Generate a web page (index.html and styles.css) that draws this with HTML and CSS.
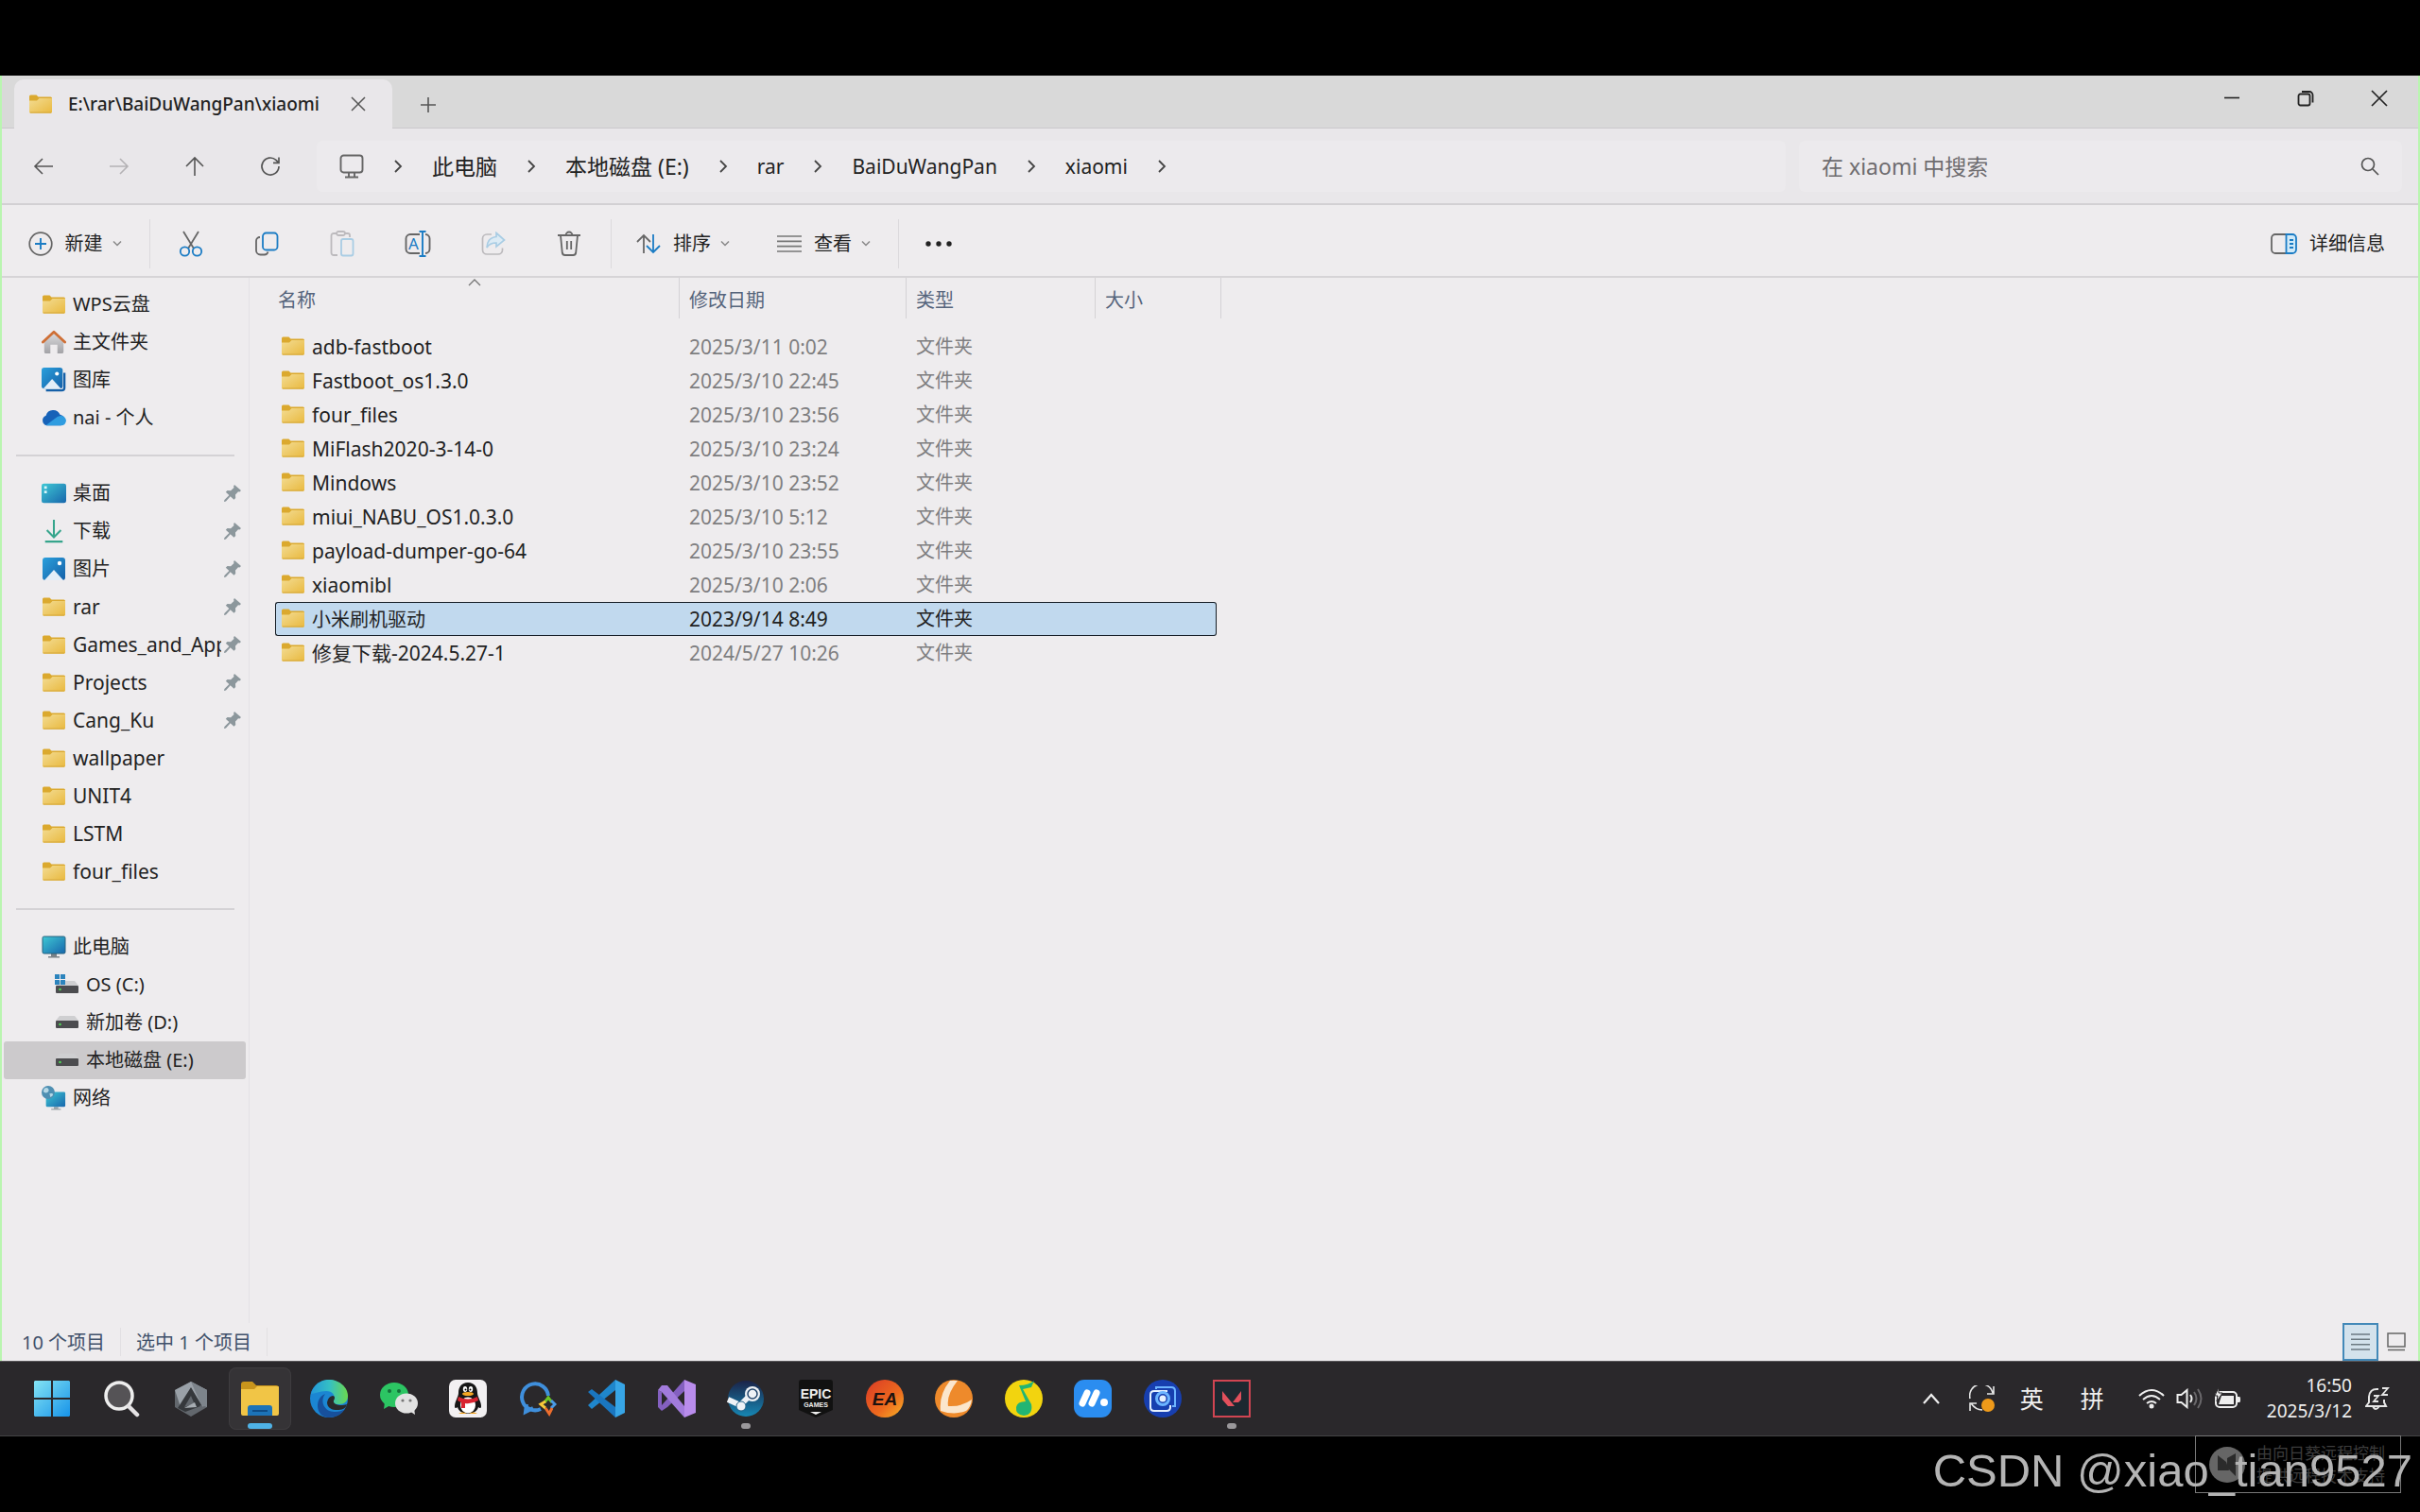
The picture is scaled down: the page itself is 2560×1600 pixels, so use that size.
FILE: index.html
```
<!DOCTYPE html>
<html lang="zh-CN">
<head>
    <meta charset="UTF-8">
    <meta name="viewport" content="width=device-width, initial-scale=1.0">
    <title>E:\rar\BaiDuWangPan\xiaomi</title>
    <link rel="stylesheet" href="styles.css">
</head>
<body>
    <!-- Shared icons -->
    <svg class="sprite" aria-hidden="true">
        <defs>
            <linearGradient id="g-folder" x1="0" y1="0" x2="1" y2="1"><stop offset="0" stop-color="#f3dc93"/><stop offset="1" stop-color="#e9b93f"/></linearGradient>
            <linearGradient id="g-blue" x1="0" y1="0" x2="1" y2="1"><stop offset="0" stop-color="#2ba0dc"/><stop offset="1" stop-color="#1560a8"/></linearGradient>
            <linearGradient id="g-teal" x1="0" y1="0" x2="1" y2="1"><stop offset="0" stop-color="#3fc8d4"/><stop offset="1" stop-color="#1766ac"/></linearGradient>
            <linearGradient id="g-gray" x1="0" y1="0" x2="0" y2="1"><stop offset="0" stop-color="#dcdcde"/><stop offset="1" stop-color="#a2a2a6"/></linearGradient>
            <linearGradient id="g-win" x1="0" y1="0" x2="1" y2="1"><stop offset="0" stop-color="#84e4f4"/><stop offset="1" stop-color="#1793e8"/></linearGradient>
            <linearGradient id="g-edge" x1="0" y1="0" x2="1" y2="0"><stop offset="0" stop-color="#2397d8"/><stop offset="0.5" stop-color="#35bfc4"/><stop offset="1" stop-color="#6bd84e"/></linearGradient>
            <linearGradient id="g-steam" x1="0" y1="0" x2="0" y2="1"><stop offset="0" stop-color="#1b2348"/><stop offset="1" stop-color="#1687b4"/></linearGradient>
            <linearGradient id="g-ea" x1="0" y1="0" x2="1" y2="1"><stop offset="0" stop-color="#d93a26"/><stop offset="0.6" stop-color="#ee6a1e"/><stop offset="1" stop-color="#f6b428"/></linearGradient>
        </defs>
        <symbol id="folder" viewBox="0 0 24 20">
            <path d="M0 2a1.500 1.500 0 0 1 1.500-1.500h6l2 2h13a1.500 1.500 0 0 1 1.500 1.500v14a1.500 1.500 0 0 1-1.500 1.500h-21a1.500 1.500 0 0 1-1.500-1.500z" fill="#dba92e"/>
            <path d="M0 6.500h8l2.500-2.500h13.500v14a1.500 1.500 0 0 1-1.500 1.500h-21a1.500 1.500 0 0 1-1.500-1.500z" fill="url(#g-folder)"/>
            <path d="M1 19h22" stroke="#d6a93c"/>
        </symbol>
        <symbol id="picture" viewBox="0 0 26 26">
            <rect x="1" y="1" width="24" height="24" rx="3" fill="url(#g-blue)"/>
            <path d="M3 25l10-11 10 11z" fill="#e4eef8"/><circle cx="19" cy="7" r="2.200" fill="#fff"/>
        </symbol>
        <symbol id="drive" viewBox="0 0 26 14">
            <path d="M5 0h16l4 5h-24z" fill="#cfcfd1"/><rect x="1" y="5" width="24" height="8" rx="1" fill="#4c4c4f"/><circle cx="5.500" cy="9" r="1.300" fill="#4fd455"/>
        </symbol>
        <symbol id="pin" viewBox="0 0 18 18">
            <path d="M11 0l7 6-1.500 1.500-1.500-.3-3 3.300.2 3.500-1.700 1.800-3.800-3.500-4.700 5.200-2 .500.400-2 5-4.900-3.600-3.400 1.700-1.700 3.600.2 3.400-3.200-.4-1.600z" fill="#8c979c"/>
        </symbol>
        <symbol id="chev-right" viewBox="0 0 10 16"><path d="M2 2l6 6-6 6" fill="none" stroke="#444" stroke-width="1.800"/></symbol>
        <symbol id="chev-down" viewBox="0 0 12 8"><path d="M2 1.500l4 4 4-4" fill="none" stroke="#888" stroke-width="1.500"/></symbol>
    </svg>

    <main class="screen">
        <header class="titlebar">
            <div class="tab">
                <svg class="ico-folder"><use href="#folder"/></svg>
                <span class="tab-title">E:\rar\BaiDuWangPan\xiaomi</span>
                <button class="tab-close" aria-label="关闭标签页"><svg width="16" height="16" viewBox="0 0 16 16"><path d="M1 1l14 14M15 1L1 15" stroke="#555" stroke-width="1.500"/></svg></button>
            </div>
            <button class="tab-new" aria-label="新标签页"><svg width="18" height="18" viewBox="0 0 18 18"><path d="M9 1v16M1 9h16" stroke="#555" stroke-width="1.600"/></svg></button>
            <div class="window-buttons">
                <button aria-label="最小化"><svg width="18" height="18" viewBox="0 0 18 18"><path d="M1 8.500h16" stroke="#222" stroke-width="1.600"/></svg></button>
                <button aria-label="还原"><svg width="18" height="18" viewBox="0 0 18 18" fill="none" stroke="#222" stroke-width="1.800"><rect x="1.500" y="4.500" width="12" height="12" rx="2"/><path d="M5 2h8a3.500 3.500 0 0 1 3.500 3.500v8"/></svg></button>
                <button aria-label="关闭"><svg width="18" height="18" viewBox="0 0 18 18"><path d="M1 1l16 16M17 1L1 17" stroke="#222" stroke-width="1.700"/></svg></button>
            </div>
        </header>

        <div class="address-row">
            <div class="nav-buttons">
                <button aria-label="后退"><svg width="22" height="20" viewBox="0 0 22 20"><path d="M21 10H2M10 2l-8 8 8 8" fill="none" stroke="#555" stroke-width="1.600"/></svg></button>
                <button aria-label="前进"><svg width="22" height="20" viewBox="0 0 22 20"><path d="M1 10h19M12 2l8 8-8 8" fill="none" stroke="#b4b2b5" stroke-width="1.600"/></svg></button>
                <button aria-label="向上"><svg width="20" height="22" viewBox="0 0 20 22"><path d="M10 21V2M1 11l9-9 9 9" fill="none" stroke="#555" stroke-width="1.600"/></svg></button>
                <button aria-label="刷新"><svg width="22" height="22" viewBox="0 0 22 22"><path d="M20 11a9 9 0 1 1-3-6.700l2.500 2.500M20 1.500v5.800h-6" fill="none" stroke="#555" stroke-width="1.700"/></svg></button>
            </div>
            <nav class="breadcrumb" aria-label="路径">
                <svg width="26" height="26" viewBox="0 0 26 26" fill="none" stroke="#666" stroke-width="1.900"><rect x="1.500" y="1.500" width="23" height="18" rx="3"/><path d="M10 20v4M16 20v4M6 24.500h14"/></svg>
                <svg class="sep"><use href="#chev-right"/></svg>
                <a href="#">此电脑</a>
                <svg class="sep"><use href="#chev-right"/></svg>
                <a href="#">本地磁盘 (E:)</a>
                <svg class="sep"><use href="#chev-right"/></svg>
                <a href="#" class="latin">rar</a>
                <svg class="sep"><use href="#chev-right"/></svg>
                <a href="#" class="latin">BaiDuWangPan</a>
                <svg class="sep"><use href="#chev-right"/></svg>
                <a href="#" class="latin">xiaomi</a>
                <svg class="sep"><use href="#chev-right"/></svg>
            </nav>
            <div class="search">
                <input type="text" placeholder="在 xiaomi 中搜索" aria-label="搜索">
                <svg width="20" height="20" viewBox="0 0 20 20" fill="none" stroke="#555" stroke-width="1.700"><circle cx="8" cy="8" r="6.500"/><path d="M13 13l6 6"/></svg>
            </div>
        </div>

        <div class="toolbar">
            <button class="tool-label tool-new">
                <svg width="26" height="26" viewBox="0 0 26 26" fill="none"><circle cx="13" cy="13" r="11.800" stroke="#666" stroke-width="1.700"/><path d="M13 7v12M7 13h12" stroke="#1b7cc4" stroke-width="1.900"/></svg>
                <span>新建</span>
                <svg class="down"><use href="#chev-down"/></svg>
            </button>
            <i class="divider"></i>
            <div class="tools">
                <button aria-label="剪切"><svg width="26" height="28" viewBox="0 0 26 28" fill="none" stroke-width="1.800"><path d="M5 1l11 18M21 1L10 19" stroke="#666"/><circle cx="6.500" cy="22" r="4.700" stroke="#1b7cc4"/><circle cx="19.500" cy="22" r="4.700" stroke="#1b7cc4"/></svg></button>
                <button aria-label="复制"><svg width="26" height="26" viewBox="0 0 26 26" fill="none" stroke-width="1.800"><path d="M6 6a4 4 0 0 0-4 4v10a4.500 4.500 0 0 0 4.500 4.500h4a4 4 0 0 0 4-3" stroke="#666"/><rect x="9" y="1.500" width="15.500" height="18" rx="3.500" stroke="#1b7cc4"/></svg></button>
                <button aria-label="粘贴"><svg width="26" height="28" viewBox="0 0 26 28" fill="none" stroke-width="1.800"><path d="M8 26H4a2.500 2.500 0 0 1-2.500-2.500v-18A2.500 2.500 0 0 1 4 3h3M16 3h3a2 2 0 0 1 2 2v2" stroke="#bcbabd"/><rect x="7" y="1" width="9" height="4" rx="2" stroke="#bcbabd"/><rect x="12" y="9" width="12.500" height="17.500" rx="2" stroke="#a9cde4"/></svg></button>
                <button aria-label="重命名"><svg width="28" height="28" viewBox="0 0 28 28" fill="none" stroke-width="1.900"><path d="M16 4H6a4.500 4.500 0 0 0-4.500 4.500v11A4.500 4.500 0 0 0 6 24h10M22 4a4.500 4.500 0 0 1 4.500 4.500v11A4.500 4.500 0 0 1 22 24" stroke="#666"/><path d="M15.500 1h7M15.500 27h7M19 1v26" stroke="#1b7cc4"/><text x="4" y="20" class="rename-a">A</text></svg></button>
                <button aria-label="共享"><svg width="26" height="26" viewBox="0 0 26 26" fill="none" stroke-width="1.700"><path d="M11 3H6a4.500 4.500 0 0 0-4.500 4.500v12A4.500 4.500 0 0 0 6 24h12a4.500 4.500 0 0 0 4.500-4.500v-2" stroke="#bcbabd"/><path d="M16 1.500l8.500 7.500-8.500 7v-4q-7 0-10 5 .500-10.500 10-11.500z" fill="#dcebf5" stroke="#a9cde4"/></svg></button>
                <button aria-label="删除"><svg width="26" height="28" viewBox="0 0 26 28" fill="none" stroke="#666" stroke-width="1.800"><path d="M1 5h24M4 5l1.800 18.500a3 3 0 0 0 3 2.500h8.400a3 3 0 0 0 3-2.500L22 5M9.500 5a3.500 3.500 0 0 1 7 0M10.800 11v9M15.200 11v9"/></svg></button>
            </div>
            <i class="divider"></i>
            <button class="tool-label tool-sort">
                <svg width="26" height="22" viewBox="0 0 26 22" fill="none" stroke-width="1.800"><path d="M8 21V2M1 9l7-7 7 7" stroke="#666"/><path d="M18 1v19M11 13l7 7 7-7" stroke="#1b7cc4"/></svg>
                <span>排序</span>
                <svg class="down"><use href="#chev-down"/></svg>
            </button>
            <button class="tool-label tool-view">
                <svg width="26" height="20" viewBox="0 0 26 20"><path d="M0 2h26M0 7.300h26M0 12.700h26M0 18h26" stroke="#777" stroke-width="1.700"/></svg>
                <span>查看</span>
                <svg class="down"><use href="#chev-down"/></svg>
            </button>
            <i class="divider"></i>
            <button class="tool-more" aria-label="更多"><svg width="28" height="6" viewBox="0 0 28 6" fill="#222"><circle cx="3" cy="3" r="2.700"/><circle cx="14" cy="3" r="2.700"/><circle cx="25" cy="3" r="2.700"/></svg></button>
            <button class="tool-label tool-details">
                <svg width="28" height="22" viewBox="0 0 28 22" fill="none" stroke-width="1.800"><path d="M16 21H5a4 4 0 0 1-4-4V5a4 4 0 0 1 4-4h11" stroke="#666"/><path d="M16.500 1H23a4 4 0 0 1 4 4v12a4 4 0 0 1-4 4h-6.500z" fill="#cfe9f8" stroke="#1b7cc4"/><path d="M20 7h4M20 11h4M20 15h4" stroke="#1b7cc4"/></svg>
                <span>详细信息</span>
            </button>
        </div>

        <div class="content">
            <nav class="sidebar" aria-label="导航窗格">
                <a href="#"><svg class="ico-folder"><use href="#folder"/></svg><span class="zh">WPS云盘</span></a>
                <a href="#"><svg width="28" height="28" viewBox="0 0 28 28"><path d="M3 12L14 3l11 9v13a2 2 0 0 1-2 2h-5v-10h-8v10H5a2 2 0 0 1-2-2z" fill="url(#g-gray)"/><path d="M1.500 14L14 2.500 26.500 14" fill="none" stroke="#cf6f35" stroke-width="3" stroke-linecap="round" stroke-linejoin="round"/></svg><span class="zh">主文件夹</span></a>
                <a href="#"><svg width="28" height="28" viewBox="0 0 28 28"><path d="M5 26h18q3 0 3-3V6" fill="none" stroke="#1560a8" stroke-width="2.500"/><rect width="24" height="24" rx="3" fill="url(#g-blue)"/><path d="M2 24l10-11 10 11z" fill="#e4eef8"/><circle cx="17.500" cy="7" r="2.200" fill="#fff"/></svg><span class="zh">图库</span></a>
                <a href="#"><svg width="28" height="18" viewBox="0 0 28 18"><path d="M6 18a6 6 0 0 1-1-11.500A8.500 8.500 0 0 1 21 5.500 6.500 6.500 0 0 1 22 18z" fill="#1662b8"/><path d="M5 17.500L18 8q8-3.500 10 4-.500 6-6 6H6z" fill="#2f9ce0"/></svg><span class="zh">nai - 个人</span></a>
                <hr>
                <a href="#"><svg width="28" height="22" viewBox="0 0 28 22"><rect width="28" height="22" rx="2.500" fill="url(#g-teal)"/><path d="M3 3h3v3H3zM3 8h3v3H3z" fill="#d8f6fa"/></svg><span class="zh">桌面</span><svg class="pin"><use href="#pin"/></svg></a>
                <a href="#"><svg width="28" height="28" viewBox="0 0 28 28"><path d="M14 1v19M6 13l8 8 8-8M4 26h20" fill="none" stroke="#36a58c" stroke-width="2.200"/></svg><span class="zh">下载</span><svg class="pin"><use href="#pin"/></svg></a>
                <a href="#"><svg width="26" height="26"><use href="#picture"/></svg><span class="zh">图片</span><svg class="pin"><use href="#pin"/></svg></a>
                <a href="#"><svg class="ico-folder"><use href="#folder"/></svg><span>rar</span><svg class="pin"><use href="#pin"/></svg></a>
                <a href="#"><svg class="ico-folder"><use href="#folder"/></svg><span>Games_and_App</span><svg class="pin"><use href="#pin"/></svg></a>
                <a href="#"><svg class="ico-folder"><use href="#folder"/></svg><span>Projects</span><svg class="pin"><use href="#pin"/></svg></a>
                <a href="#"><svg class="ico-folder"><use href="#folder"/></svg><span>Cang_Ku</span><svg class="pin"><use href="#pin"/></svg></a>
                <a href="#"><svg class="ico-folder"><use href="#folder"/></svg><span>wallpaper</span></a>
                <a href="#"><svg class="ico-folder"><use href="#folder"/></svg><span>UNIT4</span></a>
                <a href="#"><svg class="ico-folder"><use href="#folder"/></svg><span>LSTM</span></a>
                <a href="#"><svg class="ico-folder"><use href="#folder"/></svg><span>four_files</span></a>
                <hr>
                <a href="#"><svg width="26" height="24" viewBox="0 0 26 24"><path d="M10 19h6v3h3v1.500H7V22h3z" fill="#7a8288"/><rect x="1" y="1" width="24" height="18" rx="1.500" fill="url(#g-teal)" stroke="#27627f"/></svg><span class="zh">此电脑</span></a>
                <a href="#" class="drive"><svg width="26" height="22" viewBox="0 0 26 22"><use href="#drive" y="7" width="26" height="14"/><path d="M0 0h5v5H0zM6 0h5v5H6zM0 6h5v5H0zM6 6h5v5H6z" fill="#2c84bd"/></svg><span class="zh">OS (C:)</span></a>
                <a href="#" class="drive"><svg width="26" height="14"><use href="#drive"/></svg><span class="zh">新加卷 (D:)</span></a>
                <a href="#" class="drive current"><svg width="26" height="14"><use href="#drive"/></svg><span class="zh">本地磁盘 (E:)</span></a>
                <a href="#"><svg width="28" height="28" viewBox="0 0 28 28"><path d="M14 24h5v2h3v1.500H11V26h3z" fill="#9aa3a8"/><rect x="5" y="7" width="22" height="17" rx="1.500" fill="url(#g-teal)"/><circle cx="7.500" cy="7.500" r="7.500" fill="#4e8fb2"/><path d="M3 3q4-2 5 1t-3 4q-3 0-3-2zM9 9q4-1 4 1t-3 3z" fill="#b5d8e6"/></svg><span class="zh">网络</span></a>
            </nav>

            <section class="files">
                <table>
                    <colgroup><col class="c-name"><col class="c-date"><col class="c-type"><col class="c-size"><col class="c-end"></colgroup>
                    <thead>
                        <tr>
                            <th><button>名称</button><svg class="sort-mark" width="14" height="9" viewBox="0 0 14 9"><path d="M1 8l6-6 6 6" fill="none" stroke="#777" stroke-width="1.400"/></svg></th>
                            <th><button>修改日期</button></th>
                            <th><button>类型</button></th>
                            <th colspan="2"><button>大小</button></th>
                        </tr>
                    </thead>
                    <tbody>
                        <tr><td><svg class="ico-folder"><use href="#folder"/></svg>adb-fastboot</td><td>2025/3/11 0:02</td><td>文件夹</td><td></td></tr>
                        <tr><td><svg class="ico-folder"><use href="#folder"/></svg>Fastboot_os1.3.0</td><td>2025/3/10 22:45</td><td>文件夹</td><td></td></tr>
                        <tr><td><svg class="ico-folder"><use href="#folder"/></svg>four_files</td><td>2025/3/10 23:56</td><td>文件夹</td><td></td></tr>
                        <tr><td><svg class="ico-folder"><use href="#folder"/></svg>MiFlash2020-3-14-0</td><td>2025/3/10 23:24</td><td>文件夹</td><td></td></tr>
                        <tr><td><svg class="ico-folder"><use href="#folder"/></svg>Mindows</td><td>2025/3/10 23:52</td><td>文件夹</td><td></td></tr>
                        <tr><td><svg class="ico-folder"><use href="#folder"/></svg>miui_NABU_OS1.0.3.0</td><td>2025/3/10 5:12</td><td>文件夹</td><td></td></tr>
                        <tr><td><svg class="ico-folder"><use href="#folder"/></svg>payload-dumper-go-64</td><td>2025/3/10 23:55</td><td>文件夹</td><td></td></tr>
                        <tr><td><svg class="ico-folder"><use href="#folder"/></svg>xiaomibl</td><td>2025/3/10 2:06</td><td>文件夹</td><td></td></tr>
                        <tr class="selected"><td><svg class="ico-folder"><use href="#folder"/></svg><span class="zh">小米刷机驱动</span></td><td>2023/9/14 8:49</td><td>文件夹</td><td></td></tr>
                        <tr><td><svg class="ico-folder"><use href="#folder"/></svg>修复下载-2024.5.27-1</td><td>2024/5/27 10:26</td><td>文件夹</td><td></td></tr>
                    </tbody>
                </table>
            </section>
        </div>

        <footer class="statusbar">
            <span>10 个项目</span>
            <span>选中 1 个项目</span>
            <div class="view-switch">
                <button class="on" aria-label="详细信息视图"><svg width="20" height="20" viewBox="0 0 20 20"><path d="M0 2h20M0 7.300h20M0 12.700h20M0 18h20" stroke="#6c7a82" stroke-width="1.600"/></svg></button>
                <button aria-label="大图标视图"><svg width="20" height="20" viewBox="0 0 20 20" fill="none" stroke="#666" stroke-width="1.500"><path d="M1 1h18v14H1zM1 18.500h18"/></svg></button>
            </div>
        </footer>

        <div class="taskbar">
            <div class="apps">
                <button aria-label="开始"><svg class="app" viewBox="0 0 40 40"><path d="M2 1h17v18H1V2zM21 1h17l1 1v17H21zM1 21h18v18H2l-1-1zM21 21h18v17l-1 1H21z" fill="url(#g-win)"/></svg></button>
                <button aria-label="搜索"><svg class="app" viewBox="0 0 40 40"><circle cx="18" cy="17" r="14" fill="#555356" stroke="#eee" stroke-width="3.500"/><path d="M28 28l9 9" stroke="#e4e2e4" stroke-width="4.500" stroke-linecap="round"/></svg></button>
                <button aria-label="游戏助手"><svg class="app" viewBox="0 0 40 40"><path d="M20 2l17 9v18l-17 10L3 29V11z" fill="#62676d"/><path d="M20 2l17 9-4 18-13-20L9 29 3 11z" fill="#9aa1a8"/><path d="M20 2l17 9v18l-6-2z" fill="#7d848b"/><path d="M20 8l11 19-6 2-5-12-7 12 9-3 8 2-16 6-8-4z" fill="#35383c"/><path d="M13 30l11-6 2 5z" fill="#a7adb3"/></svg></button>
                <button class="active" aria-label="文件资源管理器"><svg class="app" viewBox="0 0 40 40"><path d="M0 5q0-3 3-3h9l4 4h21q3 0 3 3v6H0z" fill="#c8951c"/><path d="M0 10h14l3-3h22q1 0 1 1v28q0 2-2 2H2q-2 0-2-2z" fill="#f1c546"/><path d="M7 38V30q0-3 3-3h20q3 0 3 3v8z" fill="#1c73b8"/><path d="M12 33h16" stroke="#0e4c87" stroke-width="2"/></svg></button>
                <button aria-label="Edge"><svg class="app" viewBox="0 0 40 40"><circle cx="20" cy="20" r="20" fill="#1b86d2"/><path d="M1 15C5 2 15 0 20 0c11 0 20 8 20 17 0 6-4 9-9 9-6 0-8-2-6-5 2-4-1-9-8-9-7 0-12 3-16 3z" fill="url(#g-edge)"/><path d="M16 15c-6 8-1 19 10 19 5 0 8-1 11-3-4 6-10 9-17 9C10 40 6 30 9 22q2-5 7-7z" fill="#17509c"/><path d="M24 17c3 0 2 4 1 5-1 3 3 5 9 5 3 0 4-1 5-1-1 3-2 4-4 5-5 2-17 2-17-7q1-6 6-7z" fill="#2a282b"/></svg></button>
                <button aria-label="微信"><svg class="app" viewBox="0 0 40 40"><ellipse cx="15" cy="16" rx="15" ry="13" fill="#2cc563"/><path d="M5 24l-1 7 7-4z" fill="#2cc563"/><circle cx="10" cy="12" r="2" fill="#14713a"/><circle cx="20" cy="12" r="2" fill="#14713a"/><ellipse cx="28" cy="25" rx="12" ry="10.500" fill="#e2e2e2"/><path d="M31 33l6 4-1-7z" fill="#e2e2e2"/><circle cx="24" cy="22" r="1.600" fill="#777"/><circle cx="32" cy="22" r="1.600" fill="#777"/></svg></button>
                <button aria-label="QQ"><svg class="app" viewBox="0 0 40 40"><rect width="40" height="40" rx="7" fill="#f2f0f2"/><path d="M20 3c7 0 10 5 10 11 0 4 4 9 4 14 0 3-2 2-3 1-1 4-5 7-11 7s-10-3-11-7c-1 1-3 2-3-1 0-5 4-10 4-14C10 8 13 3 20 3z" fill="#161616"/><ellipse cx="20" cy="27" rx="8" ry="8.500" fill="#fff"/><ellipse cx="17" cy="10" rx="2.200" ry="3" fill="#fff"/><ellipse cx="23" cy="10" rx="2.200" ry="3" fill="#fff"/><circle cx="17.500" cy="10.500" r="1"/><circle cx="22.500" cy="10.500" r="1"/><ellipse cx="20" cy="15" rx="6" ry="2" fill="#f5a623"/><path d="M10 18q10 5 20 0l1 4q-7 4-14 3v5h-4v-6l-4-2z" fill="#d8232f"/><path d="M10 36q4-3 9 0zM21 36q5-3 9 0z" fill="#f5a623"/></svg></button>
                <button aria-label="QQ 浏览器"><svg class="app" viewBox="0 0 40 40"><path d="M31 17A14 14 0 1 0 23 31M8 26l-1 8 8-4" fill="none" stroke="#3f8fdc" stroke-width="4"/><g fill="none" stroke-width="3"><path d="M27 24l4-5 4 5" stroke="#6cc424"/><path d="M34 22l4 4-4 4" stroke="#4a9be6"/><path d="M35 30l-3 6-4-6" stroke="#ee6e2d"/><path d="M28 30l-5-4 5-3" stroke="#f6c73a"/></g></svg></button>
                <button aria-label="VS Code"><svg class="app" viewBox="0 0 40 40"><path d="M29 0l10 5v30l-10 5L12 24l-8 6-4-3 0-14 4-3 8 6zM29 11L18 20l11 9z" fill="none"/><path d="M0 27L29 0v11L4 31z" fill="#1f86cc"/><path d="M0 13l4-3 25 19v11z" fill="#1a76c0"/><path d="M29 0l10 5v30l-10 5z" fill="#37a5e6"/></svg></button>
                <button aria-label="Visual Studio"><svg class="app" viewBox="0 0 40 40"><path d="M28 0v12L10 29l-6 4-4-4V11l4 2v14z" fill="#8460c0"/><path d="M0 11l4-5 6 0 18 22v12L4 13z" fill="#a27bdc"/><path d="M28 0l12 5v30l-12 5z" fill="#b98cec"/></svg></button>
                <button class="running" aria-label="Steam"><svg class="app" viewBox="0 0 40 40"><circle cx="20" cy="20" r="19" fill="url(#g-steam)"/><path d="M1 21l13 6 9-9" fill="none" stroke="#eef2f6" stroke-width="6"/><circle cx="27" cy="15" r="8" fill="#eef2f6"/><circle cx="27" cy="15" r="5" fill="#eef2f6" stroke="#22456b" stroke-width="1.500"/><circle cx="15" cy="28" r="5" fill="#eef2f6" stroke="#22638a"/></svg></button>
                <button aria-label="Epic Games"><svg class="app" viewBox="0 0 40 40"><path d="M5 0h30q3 0 3 3v29l-18 8L2 32V3q0-3 3-3z" fill="#111"/><text x="20" y="20" class="epic-top">EPIC</text><text x="20" y="29" class="epic-sub">GAMES</text><path d="M14 34h12l-6 3z" fill="#eee"/></svg></button>
                <button aria-label="EA"><svg class="app" viewBox="0 0 40 40"><circle cx="20" cy="20" r="20" fill="url(#g-ea)"/><text x="20" y="27" class="ea">EA</text></svg></button>
                <button aria-label="雷神加速器"><svg class="app" viewBox="0 0 40 40"><circle cx="20" cy="20" r="20" fill="#ee8a2b"/><path d="M16 1l8 0Q12 16 14 28q14 1 25-7-1 8-6 12-12 5-27 0Q4 16 16 1z" fill="#fbe6cc"/></svg></button>
                <button aria-label="QQ 音乐"><svg class="app" viewBox="0 0 40 40"><circle cx="20" cy="20" r="20" fill="#f2d40f"/><path d="M31 1l-3 7-9 2 9 16q2 11-8 12-9-1-8-9 1-6 10-6L15 6q10 0 16-5z" fill="#22b573"/></svg></button>
                <button aria-label="幕布"><svg class="app" viewBox="0 0 40 40"><rect width="40" height="40" rx="11" fill="#2b8df0"/><path d="M9 25l5-11M19 25l5-11" stroke="#fff" stroke-width="7" stroke-linecap="round"/><circle cx="32" cy="24" r="4" fill="#fff"/></svg></button>
                <button aria-label="驱动管理"><svg class="app" viewBox="0 0 40 40"><circle cx="20" cy="20" r="20" fill="#173fb0"/><g fill="none" stroke-width="2"><path d="M13 10V8h16q4 0 4 4v16h-3" stroke="#6cb4ff"/><path d="M25 12H11q-4 0-4 4v13q0 4 4 4h13q4 0 4-4v-2" stroke="#e6f1ff"/><circle cx="20" cy="20" r="6.500" stroke="#6cb4ff" stroke-width="3"/></g><circle cx="20" cy="20" r="3.500" fill="#e6f1ff"/></svg></button>
                <button class="running" aria-label="VALORANT"><svg class="app" viewBox="0 0 40 40"><rect x="1" y="1" width="38" height="38" fill="#1d2830" stroke="#cf4552" stroke-width="2"/><path d="M10 12l13 16h-7l-6-7zM30 12v9l-3 3h-6z" fill="#e0505c"/></svg></button>
            </div>
            <div class="tray">
                <button aria-label="显示隐藏的图标"><svg width="20" height="14" viewBox="0 0 20 14"><path d="M2 12l8-9 8 9" fill="none" stroke="#eee" stroke-width="2.200"/></svg></button>
                <button class="t-sync" aria-label="更新"><svg width="28" height="28" viewBox="0 0 28 28" fill="none" stroke="#e6e6e6" stroke-width="1.600"><path d="M1 14A12 12 0 0 1 25 8M26 1v8h-7M14 26Q7 26 2 19M1 27v-8h7"/><circle cx="20" cy="21" r="7" fill="#ef9a1a" stroke="none"/></svg></button>
                <button class="ime">英</button>
                <button class="ime">拼</button>
                <button class="t-status" aria-label="网络、音量和电池">
                    <svg width="28" height="22" viewBox="0 0 28 22" fill="none" stroke="#eee" stroke-width="2"><path d="M1 8q13-12 26 0M5 12q9-8 18 0M9 16q5-4 10 0"/><circle cx="14" cy="19" r="2.500" fill="#eee" stroke="none"/></svg>
                    <svg width="28" height="22" viewBox="0 0 28 22" fill="none" stroke="#eee" stroke-width="2"><path d="M1.500 7h4l6-5v18l-6-5h-4z"/><path d="M15 7q3 4 0 8"/><path d="M19 4q5 7 0 14M23 1q7 10 0 20" stroke="#69676a"/></svg>
                    <svg width="28" height="24" viewBox="0 0 28 24"><rect x="2" y="5" width="22" height="16" rx="4" fill="none" stroke="#eee" stroke-width="2"/><path d="M8 9h13v9H5zM25 10h2q1 0 1 2v2q0 2-1 2h-2z" fill="#eee"/><path d="M5 0L1 9h3l-1 6 6-9H5z" fill="#eee" stroke="#2a282b"/></svg>
                </button>
                <button class="clock"><span>16:50</span><span>2025/3/12</span></button>
                <button class="t-bell" aria-label="通知"><svg width="26" height="26" viewBox="0 0 26 26" fill="none" stroke="#e6e6e6" stroke-width="2"><path d="M14 3Q5 2 4 11v6l-3 4h21l-2-4v-3M8 21q3 6 7 0"/><path d="M9 10h5l-5 6h5M18 2h6l-6 7h6" stroke-width="1.800"/></svg></button>
            </div>
        </div>
    </main>

    <div class="remote-badge">
        <svg width="38" height="38" viewBox="0 0 38 38"><circle cx="19" cy="19" r="19" fill="#666"/><path d="M9 9l9 7 3 9H9zM19 12l9-5v24l-9-9z" fill="#2b2b2b"/></svg>
        <p>由向日葵远程控制<br>提供远程技术支持</p>
    </div>
    <div class="watermark">CSDN @xiao_tian9527</div>
</body>
</html>
```
FILE: styles.css
```
* {
    box-sizing: border-box;
}

body {
    margin: 0;
    min-height: 100vh;
    display: flex;
    flex-direction: column;
    padding: 80px 0;
    background: #000;
    color: #222;
    font-family: "Noto Sans", "Noto Sans CJK SC", sans-serif;
    font-size: 20px;
    line-height: 28px;
}

button, input {
    font: inherit;
    color: inherit;
    background: none;
    border: 0;
    padding: 0;
}

button {
    display: flex;
    align-items: center;
    justify-content: center;
}

a {
    color: inherit;
    text-decoration: none;
}

svg {
    display: block;
    flex: none;
}

.sprite {
    position: absolute;
    width: 0;
    height: 0;
}

.ico-folder {
    width: 24px;
    height: 20px;
}

.zh {
    font-size: 20px;
}

.screen {
    flex: 1;
    display: flex;
    flex-direction: column;
    background: #eeecee;
}

/* Title bar */
.titlebar {
    display: flex;
    align-items: flex-end;
    height: 56px;
    padding: 0 2px 0 13px;
    background: #d9d9d9;
    border-left: 2px solid #b9f5b0;
    border-right: 2px solid #b9f5b0;
    box-shadow: inset 0 -1px #cbc9cc;
}

.tab {
    display: flex;
    align-items: center;
    width: 400px;
    height: 52px;
    padding: 0 16px;
    background: #e9e7ea;
    border-radius: 10px 10px 0 0;
}

.tab-title {
    flex: 1;
    padding-left: 17px;
    font-size: 19px;
    font-weight: 500;
    white-space: nowrap;
}

.tab-close {
    width: 40px;
    height: 40px;
}

.tab-new {
    width: 76px;
    height: 50px;
}

.window-buttons {
    display: flex;
    align-self: flex-start;
    margin-left: auto;
}

.window-buttons button {
    width: 78px;
    height: 48px;
}

/* Address row */
.address-row {
    display: flex;
    align-items: center;
    height: 81px;
    padding: 0 17px 2px 4px;
    background: #e9e7ea;
    border: solid #b9f5b0;
    border-width: 0 2px;
    box-shadow: inset 0 -2px #d2d0d3;
}

.nav-buttons {
    display: flex;
    width: 329px;
}

.nav-buttons button {
    width: 80px;
    height: 48px;
}

.breadcrumb {
    flex: 1;
    display: flex;
    align-items: center;
    gap: 31px;
    height: 54px;
    padding-left: 24px;
    background: #eceaed;
    border-radius: 6px;
    font-size: 23px;
    white-space: nowrap;
}

.breadcrumb .sep {
    width: 10px;
    height: 16px;
}

.breadcrumb .latin {
    font-size: 21px;
}

.search {
    display: flex;
    align-items: center;
    width: 638px;
    height: 54px;
    margin-left: 14px;
    padding: 0 24px;
    background: #eceaed;
    border-radius: 6px;
}

.search input {
    flex: 1;
    outline: 0;
    font-size: 23px;
}

.search input::placeholder {
    color: #6e6c6f;
}

/* Toolbar */
.toolbar {
    display: flex;
    align-items: center;
    height: 77px;
    padding: 5px 35px 0 27px;
    border: solid #b9f5b0;
    border-width: 0 2px;
    box-shadow: inset 0 -2px #d6d4d7;
}

.divider {
    width: 1px;
    height: 52px;
    background: #dcdadd;
}

.tool-label {
    height: 48px;
    gap: 13px;
}

.tool-label .down {
    width: 12px;
    height: 8px;
    margin-left: -4px;
}

.tool-new {
    width: 101px;
    margin-right: 28px;
}

.tools {
    display: flex;
    padding: 0 4px 0 3px;
}

.tools button {
    width: 80px;
    height: 48px;
}

.rename-a {
    fill: #1b7cc4;
    font-size: 17px;
}

.tool-sort {
    margin-left: 26px;
}

.tool-view {
    margin: 0 28px 0 49px;
}

.tool-more {
    width: 84px;
    height: 48px;
}

.tool-details {
    margin-left: auto;
}

/* Sidebar and file list */
.content {
    flex: 1;
    display: flex;
    border: solid #b9f5b0;
    border-width: 0 2px;
}

.sidebar {
    width: 262px;
    padding: 8px 3px 0 2px;
    border-right: 1px solid #e4e2e5;
    font-size: 21px;
}

.sidebar a {
    display: flex;
    align-items: center;
    gap: 7px;
    height: 40px;
    padding: 0 5px 0 40px;
    border-radius: 3px;
}

.sidebar a > svg:first-child {
    width: 26px;
}

.sidebar a.drive {
    padding-left: 54px;
}

.sidebar a.current {
    background: #cccacc;
}

.sidebar span {
    flex: 1;
    min-width: 0;
    overflow: hidden;
    white-space: nowrap;
}

.sidebar .pin {
    width: 18px;
    height: 18px;
    margin-left: -4px;
}

.sidebar hr {
    height: 2px;
    margin: 19px 12px 19px 13px;
    border: 0;
    background: #d4d2d5;
}

.files {
    flex: 1;
    padding-left: 27px;
}

table {
    width: 1001px;
    table-layout: fixed;
    border-collapse: separate;
    border-spacing: 0;
}

.c-name { width: 428px; }
.c-date { width: 240px; }
.c-type { width: 200px; }
.c-size { width: 128px; }
.c-end { width: 5px; }

th {
    position: relative;
    padding: 0 0 12px;
    font-weight: normal;
}

th button {
    justify-content: flex-start;
    width: 100%;
    height: 43px;
    padding: 4px 0 0 10px;
    border-right: 1px solid #d4d2d5;
    color: #56657c;
}

th:first-child button {
    padding-left: 3px;
}

.sort-mark {
    position: absolute;
    top: 0;
    left: 204px;
}

td {
    height: 36px;
    padding: 0 0 0 10px;
    font-size: 21px;
    line-height: 32px;
    color: #7e7e80;
    white-space: nowrap;
}

td:first-child {
    padding-left: 7px;
    color: #222;
}

td:nth-child(3) {
    font-size: 20px;
}

td .ico-folder {
    display: inline-block;
    margin-right: 8px;
    vertical-align: -1px;
}

.selected td {
    background: #c1d9ee;
    border: solid #161e26;
    border-width: 1px 0;
    color: #222;
}

.selected td:first-child {
    padding-left: 6px;
    border-left-width: 1px;
    border-radius: 3px 0 0 3px;
}

.selected td:last-child {
    border-right-width: 1px;
    border-radius: 0 3px 3px 0;
}

/* Status bar */
.statusbar {
    display: flex;
    align-items: center;
    height: 40px;
    padding-left: 21px;
    border: solid #b9f5b0;
    border-width: 0 2px;
    color: #40516a;
}

.statusbar span {
    padding: 2px 16px 0 0;
    margin-right: 16px;
    border-right: 1px solid #e2e0e3;
}

.view-switch {
    display: flex;
    margin-left: auto;
    padding-right: 4px;
}

.view-switch button {
    width: 38px;
    height: 40px;
}

.view-switch .on {
    background: #d3e2ec;
    border: 2px solid #4389b8;
}

/* Taskbar */
.taskbar {
    display: flex;
    align-items: center;
    justify-content: space-between;
    height: 80px;
    padding: 0 32px 0 18px;
    background: #2a282b;
    border-top: 1px solid #5a585b;
    border-bottom: 1px solid #444;
    color: #eee;
}

.apps {
    display: grid;
    grid-template-columns: repeat(18, 1fr);
    width: 1322px;
}

.apps button {
    position: relative;
    justify-self: center;
    width: 66px;
    height: 66px;
    border-radius: 8px;
}

.apps .active {
    background: #353336;
    box-shadow: inset 0 0 0 1px #3e3c3f;
}

.app {
    width: 40px;
    height: 40px;
}

.active::after, .running::after {
    content: "";
    position: absolute;
    left: 50%;
    bottom: 1px;
    width: 10px;
    height: 6px;
    margin-left: -5px;
    border-radius: 3px;
    background: #9a989b;
}

.apps .active::after {
    width: 26px;
    margin-left: -13px;
    background: #4fb2e6;
}

.epic-top, .epic-sub, .ea {
    fill: #eee;
    font-family: "Liberation Sans", sans-serif;
    font-weight: bold;
    text-anchor: middle;
}

.epic-top { font-size: 14px; }
.epic-sub { font-size: 7px; }

.ea {
    fill: #1c1210;
    font-size: 19px;
    font-style: italic;
}

.tray {
    display: flex;
    align-items: center;
}

.t-sync {
    margin-left: 30px;
}

.ime {
    margin-left: 26px;
    font-size: 25px;
}

.ime + .ime {
    margin-left: 39px;
}

.t-status {
    gap: 12px;
    margin-left: 36px;
}

.clock {
    flex-direction: column;
    align-items: flex-end;
    margin: 0 14px 0 28px;
    font-size: 19px;
    line-height: 27px;
}

/* Overlays in the bottom corner */
.remote-badge {
    position: absolute;
    right: 20px;
    bottom: 20px;
    display: flex;
    align-items: center;
    gap: 12px;
    width: 218px;
    height: 61px;
    padding-left: 14px;
    border: 1px solid #777;
    color: #3c3c3c;
    font-size: 17px;
    line-height: 24px;
    white-space: nowrap;
}

.remote-badge p {
    margin: 0;
}

.watermark {
    position: absolute;
    right: 8px;
    bottom: 16px;
    color: #b4b4b4;
    font-family: "Liberation Sans", sans-serif;
    font-size: 49px;
    line-height: 56px;
}
```
